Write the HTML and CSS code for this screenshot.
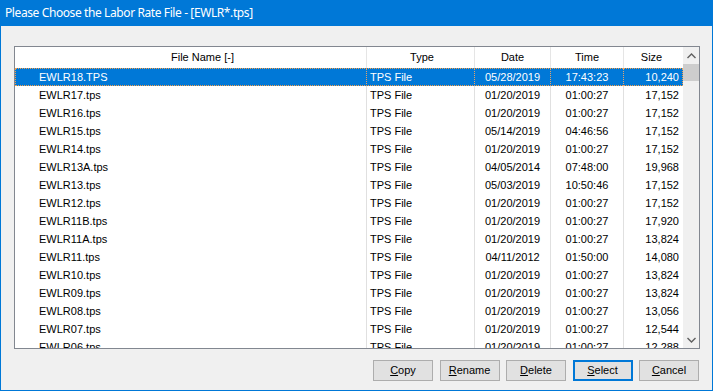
FILE: index.html
```html
<!DOCTYPE html>
<html>
<head>
<meta charset="utf-8">
<link rel="stylesheet" href="styles.css">
</head>
<body>
<div class="window">
  <div class="titlebar">Please Choose the Labor Rate File - [EWLR*.tps]</div>
  <div class="client">
    <div class="listbox">
      <div class="listview">
        <div class="row header">
          <div class="cell c-name">File Name [-]</div>
          <div class="cell c-type">Type</div>
          <div class="cell c-date">Date</div>
          <div class="cell c-time">Time</div>
          <div class="cell c-size">Size</div>
        </div>
        <div class="body">
          <div class="row selected"><div class="cell c-name">EWLR18.TPS</div><div class="cell c-type">TPS File</div><div class="cell c-date">05/28/2019</div><div class="cell c-time">17:43:23</div><div class="cell c-size">10,240</div></div>
          <div class="row"><div class="cell c-name">EWLR17.tps</div><div class="cell c-type">TPS File</div><div class="cell c-date">01/20/2019</div><div class="cell c-time">01:00:27</div><div class="cell c-size">17,152</div></div>
          <div class="row"><div class="cell c-name">EWLR16.tps</div><div class="cell c-type">TPS File</div><div class="cell c-date">01/20/2019</div><div class="cell c-time">01:00:27</div><div class="cell c-size">17,152</div></div>
          <div class="row"><div class="cell c-name">EWLR15.tps</div><div class="cell c-type">TPS File</div><div class="cell c-date">05/14/2019</div><div class="cell c-time">04:46:56</div><div class="cell c-size">17,152</div></div>
          <div class="row"><div class="cell c-name">EWLR14.tps</div><div class="cell c-type">TPS File</div><div class="cell c-date">01/20/2019</div><div class="cell c-time">01:00:27</div><div class="cell c-size">17,152</div></div>
          <div class="row"><div class="cell c-name">EWLR13A.tps</div><div class="cell c-type">TPS File</div><div class="cell c-date">04/05/2014</div><div class="cell c-time">07:48:00</div><div class="cell c-size">19,968</div></div>
          <div class="row"><div class="cell c-name">EWLR13.tps</div><div class="cell c-type">TPS File</div><div class="cell c-date">05/03/2019</div><div class="cell c-time">10:50:46</div><div class="cell c-size">17,152</div></div>
          <div class="row"><div class="cell c-name">EWLR12.tps</div><div class="cell c-type">TPS File</div><div class="cell c-date">01/20/2019</div><div class="cell c-time">01:00:27</div><div class="cell c-size">17,152</div></div>
          <div class="row"><div class="cell c-name">EWLR11B.tps</div><div class="cell c-type">TPS File</div><div class="cell c-date">01/20/2019</div><div class="cell c-time">01:00:27</div><div class="cell c-size">17,920</div></div>
          <div class="row"><div class="cell c-name">EWLR11A.tps</div><div class="cell c-type">TPS File</div><div class="cell c-date">01/20/2019</div><div class="cell c-time">01:00:27</div><div class="cell c-size">13,824</div></div>
          <div class="row"><div class="cell c-name">EWLR11.tps</div><div class="cell c-type">TPS File</div><div class="cell c-date">04/11/2012</div><div class="cell c-time">01:50:00</div><div class="cell c-size">14,080</div></div>
          <div class="row"><div class="cell c-name">EWLR10.tps</div><div class="cell c-type">TPS File</div><div class="cell c-date">01/20/2019</div><div class="cell c-time">01:00:27</div><div class="cell c-size">13,824</div></div>
          <div class="row"><div class="cell c-name">EWLR09.tps</div><div class="cell c-type">TPS File</div><div class="cell c-date">01/20/2019</div><div class="cell c-time">01:00:27</div><div class="cell c-size">13,824</div></div>
          <div class="row"><div class="cell c-name">EWLR08.tps</div><div class="cell c-type">TPS File</div><div class="cell c-date">01/20/2019</div><div class="cell c-time">01:00:27</div><div class="cell c-size">13,056</div></div>
          <div class="row"><div class="cell c-name">EWLR07.tps</div><div class="cell c-type">TPS File</div><div class="cell c-date">01/20/2019</div><div class="cell c-time">01:00:27</div><div class="cell c-size">12,544</div></div>
          <div class="row"><div class="cell c-name">EWLR06.tps</div><div class="cell c-type">TPS File</div><div class="cell c-date">01/20/2019</div><div class="cell c-time">01:00:27</div><div class="cell c-size">12,288</div></div>
        </div>
      </div>
      <div class="scrollbar">
        <div class="sb-btn">
          <svg width="9" height="6" viewBox="0 0 9 6"><path d="M0.5 5 L4.5 1 L8.5 5" fill="none" stroke="#606060" stroke-width="1.4"/></svg>
        </div>
        <div class="sb-track">
          <div class="sb-thumb"></div>
        </div>
        <div class="sb-btn">
          <svg width="9" height="6" viewBox="0 0 9 6"><path d="M0.5 1 L4.5 5 L8.5 1" fill="none" stroke="#606060" stroke-width="1.4"/></svg>
        </div>
      </div>
    </div>
    <div class="buttons">
      <div class="btn"><span class="ak">C</span>opy</div>
      <div class="btn"><span class="ak">R</span>ename</div>
      <div class="btn"><span class="ak">D</span>elete</div>
      <div class="btn default"><span class="ak">S</span>elect</div>
      <div class="btn"><span class="ak">C</span>ancel</div>
    </div>
  </div>
</div>
</body>
</html>
```
FILE: styles.css
```css
* { box-sizing: border-box; }
html, body { margin: 0; padding: 0; }
body { width: 713px; height: 391px; overflow: hidden; background: #f0f0f0; }

.window {
  width: 713px;
  height: 391px;
  border: 1px solid #0078d7;
  display: flex;
  flex-direction: column;
  background: #f0f0f0;
  font-family: "Liberation Sans", Arial, sans-serif;
  font-size: 11px;
  color: #000;
}

.titlebar {
  height: 25px;
  flex: none;
  background: #0078d7;
  color: #fff;
  font-family: "Noto Sans", "Open Sans", sans-serif;
  font-size: 12px;
  letter-spacing: -0.4px;
  line-height: 24px;
  padding-left: 4px;
  white-space: nowrap;
}

.client {
  flex: 1;
  display: flex;
  flex-direction: column;
  padding: 20px 12px 9px 13px;
}

.listbox {
  height: 303px;
  flex: none;
  border: 1px solid #828790;
  background: #fff;
  display: flex;
}

.listview {
  flex: 1;
  display: flex;
  flex-direction: column;
  overflow: hidden;
}

.row {
  display: grid;
  grid-template-columns: 352px 108px 76px 73px 59px;
  height: 18px;
  line-height: 18px;
  white-space: nowrap;
}

.row.header {
  height: 21px;
  line-height: 20px;
  flex: none;
}

.body {
  flex: 1;
  overflow: hidden;
}

.cell {
  overflow: hidden;
  border-right: 1px solid #e0e0e0;
}
.cell.c-size { border-right: none; }

.header .cell { text-align: center; border-right-color: #e5e5e5; }
.header .cell.c-size { border-right: none; }

.c-name { padding-left: 24px; }
.c-type { padding-left: 3px; }
.c-date, .c-time { text-align: center; }
.c-size { text-align: right; padding-right: 4px; }

.row.selected {
  background: #0078d7;
  color: #fff;
  outline: 1px dotted #f7a04a;
  outline-offset: -1px;
}
.row.selected .cell { border-right: 1px dotted #e9a366; }
.row.selected .cell.c-size { border-right: none; }

.scrollbar {
  width: 16px;
  flex: none;
  background: #f0f0f0;
  display: flex;
  flex-direction: column;
}
.sb-btn {
  height: 17px;
  flex: none;
  display: flex;
  align-items: center;
  justify-content: center;
}
.sb-track { flex: 1; }
.sb-thumb {
  height: 17px;
  background: #cdcdcd;
}

.buttons {
  margin-top: 11px;
  display: flex;
  justify-content: flex-end;
  gap: 6.5px;
  padding-right: 1px;
}
.btn {
  width: 60px;
  height: 21px;
  background: #e1e1e1;
  border: 1px solid #adadad;
  text-align: center;
  line-height: 19px;
}
.btn.default {
  border: 2px solid #0078d7;
  line-height: 17px;
}
.ak { text-decoration: underline; }
```
